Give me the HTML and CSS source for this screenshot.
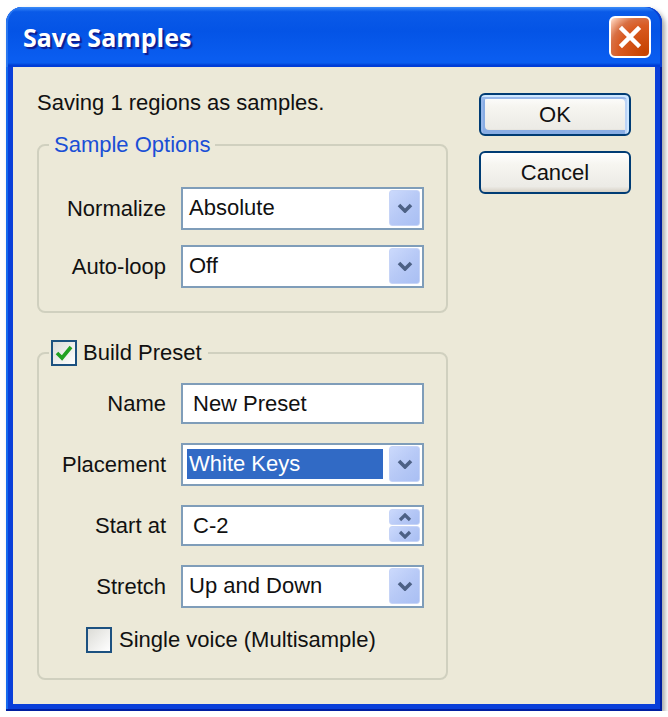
FILE: index.html
```html
<!DOCTYPE html>
<html lang="en">
<head>
<meta charset="utf-8">
<title>Save Samples</title>
<link rel="stylesheet" href="styles.css">
</head>
<body>
<div class="window">
  <div class="titlebar">
    <span class="title">Save Samples</span>
    <button class="close" aria-label="Close">
      <svg class="close-x" width="24" height="24" viewBox="0 0 24 24"><path d="M4 4 L20 20 M20 4 L4 20" stroke="#fff" stroke-width="4.5" stroke-linecap="square" fill="none"/></svg>
    </button>
  </div>
  <div class="frame">
    <div class="client">
      <div class="main">
        <p class="intro">Saving 1 regions as samples.</p>

        <fieldset class="group g1">
          <legend class="legend-text">Sample Options</legend>
          <div class="rows rows-tight">
            <div class="row">
              <span class="label">Normalize</span>
              <div class="combo">
                <span class="value">Absolute</span>
                <span class="drop"><svg width="16" height="10" viewBox="0 0 16 10"><polyline points="2,2 8,8 14,2" fill="none" stroke="#4d6185" stroke-width="3.6"/></svg></span>
              </div>
            </div>
            <div class="row">
              <span class="label">Auto-loop</span>
              <div class="combo">
                <span class="value">Off</span>
                <span class="drop"><svg width="16" height="10" viewBox="0 0 16 10"><polyline points="2,2 8,8 14,2" fill="none" stroke="#4d6185" stroke-width="3.6"/></svg></span>
              </div>
            </div>
          </div>
        </fieldset>

        <fieldset class="group g2">
          <legend class="legend-check"><span class="check"><svg width="20" height="20" viewBox="0 0 20 20"><polyline points="3,10 8,15 17,4" fill="none" stroke="#21a121" stroke-width="3.6"/></svg></span><span class="legend-label">Build Preset</span></legend>
          <div class="rows rows-loose">
            <div class="row">
              <span class="label">Name</span>
              <div class="textbox">New Preset</div>
            </div>
            <div class="row">
              <span class="label">Placement</span>
              <div class="combo">
                <span class="value selected">White Keys</span>
                <span class="drop"><svg width="16" height="10" viewBox="0 0 16 10"><polyline points="2,2 8,8 14,2" fill="none" stroke="#4d6185" stroke-width="3.6"/></svg></span>
              </div>
            </div>
            <div class="row">
              <span class="label">Start at</span>
              <div class="textbox spinbox">
                <span class="spin-value">C-2</span>
                <span class="spinner">
                  <span class="spin-btn"><svg width="14" height="9" viewBox="0 0 14 9"><polyline points="2,7 7,2 12,7" fill="none" stroke="#4d6185" stroke-width="3.2"/></svg></span>
                  <span class="spin-btn"><svg width="14" height="9" viewBox="0 0 14 9"><polyline points="2,2 7,7 12,2" fill="none" stroke="#4d6185" stroke-width="3.2"/></svg></span>
                </span>
              </div>
            </div>
            <div class="row">
              <span class="label">Stretch</span>
              <div class="combo">
                <span class="value">Up and Down</span>
                <span class="drop"><svg width="16" height="10" viewBox="0 0 16 10"><polyline points="2,2 8,8 14,2" fill="none" stroke="#4d6185" stroke-width="3.6"/></svg></span>
              </div>
            </div>
            <div class="row check-row">
              <span class="check"></span>
              <span class="check-label">Single voice (Multisample)</span>
            </div>
          </div>
        </fieldset>
      </div>

      <div class="buttons">
        <button class="btn default">OK</button>
        <button class="btn">Cancel</button>
      </div>
    </div>
  </div>
</div>
</body>
</html>
```

FILE: styles.css
```css
* {
  box-sizing: border-box;
}

html,
body {
  margin: 0;
  padding: 0;
  background: #ffffff;
}

body {
  font-family: "Liberation Sans", Arial, sans-serif;
  font-size: 22px;
  line-height: 26px;
  color: #111111;
}

/* ---------- window frame ---------- */
.window {
  width: 656px;
  margin: 7px 0 0 6px;
  border-radius: 16px 16px 0 0;
  background: #0831d9;
  box-shadow: 3px 3px 5px rgba(0, 0, 0, 0.35);
}

.titlebar {
  height: 60px;
  display: flex;
  align-items: center;
  justify-content: space-between;
  padding: 0 11px 0 17px;
  border-radius: 16px 16px 0 0;
  background: linear-gradient(180deg, #3b8cf8 0, #0a5ae8 8%, #0454e6 40%, #0a5df0 86%, #0a5df0 93%, #0550e0 95%, #003dd7 97%, #003dd7 100%);
  box-shadow: inset 2px 0 #2a78f0, inset -2px 0 #0a3fd0;
}

.title {
  font-family: "Open Sans", "Liberation Sans", sans-serif;
  font-weight: 700;
  font-size: 25px;
  line-height: 30px;
  color: #ffffff;
  text-shadow: 2px 2px 1px #0f1c8f;
}

.close {
  width: 42px;
  height: 42px;
  padding: 0;
  border: 2px solid #ffffff;
  border-radius: 6px;
  background: radial-gradient(circle at 90% 90%, #c64200 0, #d95a22 55%, #d87044 72%, #f5b89a 90%, #ffe9dd 100%);
  display: flex;
  align-items: center;
  justify-content: center;
}

.close-x {
  display: block;
}

.frame {
  padding: 0 7px 7px 7px;
  background: #0a3fd9;
  box-shadow: inset -2px -2px #001ea0, inset 2px 0 #166aee;
}

.client {
  display: flex;
  gap: 31px;
  padding: 23px 24px 24px 24px;
  background: #ece9d8;
}

/* ---------- left column ---------- */
.main {
  width: 411px;
}

.intro {
  margin: 0 0 16px 0;
}

.group {
  margin: 0;
  min-width: 0;
  border: 2px solid #d0d0bf;
  border-radius: 8px;
  padding: 29px 22px 23px 10px;
}

.g2 {
  margin-top: 27px;
  padding-top: 17px;
  padding-bottom: 25px;
}

.legend-text {
  padding: 0 4px 0 5px;
  color: #1a4fd6;
  line-height: 26px;
}

.legend-check {
  padding: 0 6px 0 2px;
  line-height: 26px;
}

.legend-check .check {
  vertical-align: top;
}

.legend-label {
  margin-left: 6px;
}

.rows {
  display: flex;
  flex-direction: column;
}

.rows-tight {
  gap: 15px;
}

.rows-loose {
  gap: 19px;
}

.row {
  display: flex;
  justify-content: flex-end;
  align-items: center;
  gap: 15px;
}

.label {
  white-space: nowrap;
}

/* ---------- controls ---------- */
.combo {
  width: 243px;
  height: 43px;
  border: 2px solid #7f9db9;
  background: #ffffff;
  display: flex;
  align-items: center;
  padding: 1px 2px 2px 4px;
}

.value {
  flex: 1;
  height: 30px;
  line-height: 30px;
  padding-left: 2px;
  margin-right: 6px;
  white-space: nowrap;
}

.value.selected {
  background: #316ac5;
  color: #ffffff;
}

.drop {
  width: 31px;
  height: 36px;
  border: 1px solid #c6d4f7;
  border-radius: 3px;
  background: linear-gradient(135deg, #cbd9fc 0, #b7c9f6 50%, #a9bff3 100%);
  display: flex;
  align-items: center;
  justify-content: center;
}

.drop svg,
.spin-btn svg,
.check svg {
  display: block;
}

.textbox {
  width: 243px;
  height: 41px;
  border: 2px solid #7f9db9;
  background: #ffffff;
  display: flex;
  align-items: center;
  padding: 0 0 0 10px;
  white-space: nowrap;
}

.spinbox {
  padding-right: 2px;
}

.spin-value {
  flex: 1;
}

.spinner {
  width: 31px;
  height: 33px;
  display: flex;
  flex-direction: column;
  gap: 1px;
}

.spin-btn {
  flex: 1;
  border: 1px solid #c6d4f7;
  border-radius: 3px;
  background: linear-gradient(135deg, #cbd9fc 0, #b7c9f6 50%, #a9bff3 100%);
  display: flex;
  align-items: center;
  justify-content: center;
}

.check {
  width: 26px;
  height: 26px;
  border: 2px solid #1c5180;
  background: linear-gradient(135deg, #dcdcd7 0, #ffffff 100%);
  display: inline-flex;
  align-items: center;
  justify-content: center;
}

.check-row {
  justify-content: flex-start;
  padding-left: 37px;
  gap: 7px;
}

/* ---------- buttons ---------- */
.buttons {
  width: 152px;
  display: flex;
  flex-direction: column;
  gap: 15px;
  padding-top: 3px;
}

.btn {
  height: 43px;
  padding: 0;
  font: inherit;
  color: #111111;
  border: 2px solid #003c74;
  border-radius: 6px;
  background: linear-gradient(180deg, #ffffff 0, #f6f5f0 30%, #ecebe6 86%, #d6d0c5 100%);
}

.btn.default {
  box-shadow: inset -2px 2px #cee7ff, inset 2px 4px #98b8ea, inset -4px 4px #bcd4f6, inset 2px -2px #89ade4, inset 4px -4px #89ade4;
}
```
